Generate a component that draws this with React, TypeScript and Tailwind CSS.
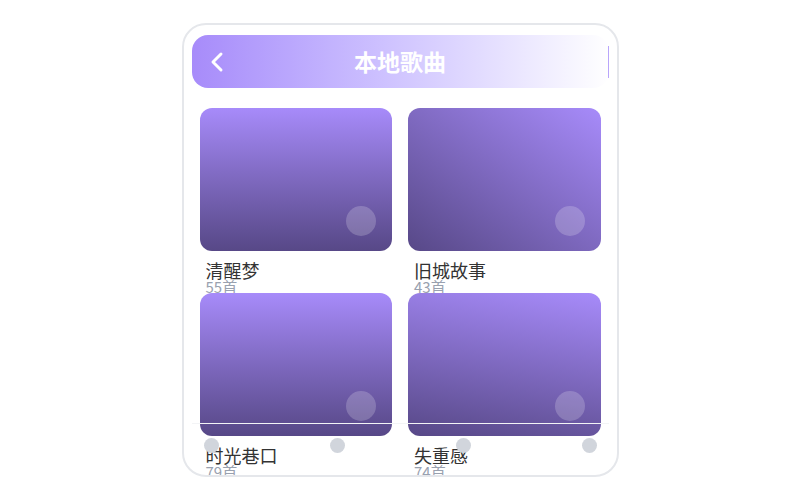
import React from 'react';
import { ChevronLeft } from 'lucide-react';

interface Album {
  title: string;
  count: number;
  grad: string;
}

const albums: Album[] = [
  { title: '清醒梦', count: 55, grad: 'bg-linear-to-b' },
  { title: '旧城故事', count: 43, grad: 'bg-linear-[215deg]' },
  { title: '时光巷口', count: 79, grad: 'bg-linear-to-b' },
  { title: '失重感', count: 74, grad: 'bg-linear-[190deg]' },
];

const AlbumTile: React.FC<{ album: Album }> = ({ album }) => (
  <div className="h-[185px]">
    <div className={`relative h-[143px] rounded-xl ${album.grad} from-[#a78bfa] to-[#574887]`}>
      <div className="absolute right-4 bottom-[15px] w-[30px] h-[30px] rounded-full bg-white/20" />
    </div>
    <div className="mt-2.5 pl-1.5">
      <div className="text-lg leading-none text-[#333]">{album.title}</div>
      <div className="text-[15px] leading-none text-gray-400">{album.count}首</div>
    </div>
  </div>
);

const App: React.FC = () => {
  return (
    <div
      className="w-full h-[500px] flex items-center justify-center bg-white"
      style={{ fontFamily: '"Noto Sans CJK SC", "Noto Sans", sans-serif' }}
    >
      <div className="relative w-[437px] h-[454px] border-2 border-gray-200 rounded-3xl overflow-hidden px-2 pt-2.5 flex flex-col">
        {/* header */}
        <div className="h-[53px] shrink-0 rounded-2xl bg-linear-to-r from-[#a78bfa] to-white flex items-center">
          <div className="w-14 pl-[9px] flex items-center text-white">
            <ChevronLeft size={32} strokeWidth={2.25} />
          </div>
          <div className="flex-1 text-center text-white text-[23px] font-bold">本地歌曲</div>
          <div className="w-14 flex justify-end">
            <div className="w-px h-8 bg-[#b9a5fb]" />
          </div>
        </div>

        {/* albums */}
        <div className="mt-5 px-2 grid grid-cols-2 gap-x-4">
          {albums.map(a => (
            <AlbumTile key={a.title} album={a} />
          ))}
        </div>

        {/* bottom bar */}
        <div className="absolute left-2 right-2 bottom-2 h-11 border-t border-gray-100 px-3 flex items-center justify-between">
          {[0, 1, 2, 3].map(i => (
            <div key={i} className="w-[15px] h-[15px] rounded-full bg-gray-300" />
          ))}
        </div>
      </div>
    </div>
  );
};

export default App;
